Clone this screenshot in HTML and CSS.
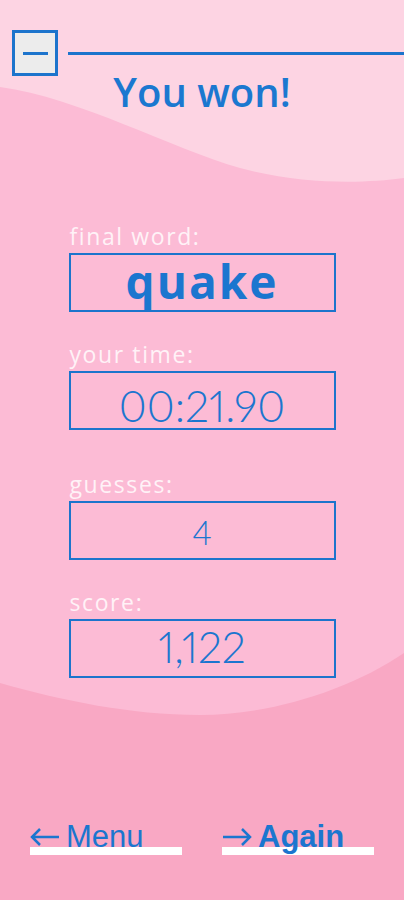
FILE: index.html
```html
<!doctype html>
<html lang="en">
<head>
    <meta charset="UTF-8">
    <meta name="viewport" content="width=device-width, initial-scale=1.0">
    <title>You won!</title>
    <link rel="stylesheet" href="styles.css">
</head>
<body>
<div class="screen">
    <!-- wavy background -->
    <svg class="backdrop" viewBox="0 0 404 900" preserveAspectRatio="none">
        <rect width="404" height="900" fill="#f9a8c4"/>
        <path d="M0 0 H404 V653 C350 690 270 715 200 715 C130 715 60 700 0 683 Z" fill="#fcbbd5"/>
        <path d="M0 0 H404 V178 C360 184 300 184 240 168 C170 148 80 98 0 87 Z" fill="#fdd4e3"/>
    </svg>

    <header class="topbar">
        <button class="collapse-btn"><span class="collapse-btn-bar"></span></button>
        <div class="topbar-line"></div>
    </header>

    <h1 class="title">You won!</h1>

    <div class="stats">
        <div class="stat">
            <div class="stat-label">final word:</div>
            <div class="stat-box word-box"><span class="stat-word">quake</span></div>
        </div>
        <div class="stat">
            <div class="stat-label">your time:</div>
            <div class="stat-box time-box"><span class="stat-num">00:21.90</span></div>
        </div>
        <div class="stat stat-spaced">
            <div class="stat-label">guesses:</div>
            <div class="stat-box guess-box"><span class="stat-num small">4</span></div>
        </div>
        <div class="stat">
            <div class="stat-label">score:</div>
            <div class="stat-box score-box"><span class="stat-num">1,122</span></div>
        </div>
    </div>

    <nav class="actions">
        <a href="#" class="action">
            <svg class="arrow" viewBox="0 0 30 18"><path d="M29 9 H2 M10 1 L2 9 L10 17"/></svg>
            <span>Menu</span>
        </a>
        <a href="#" class="action action-bold">
            <svg class="arrow" viewBox="0 0 30 18"><path d="M1 9 H28 M20 1 L28 9 L20 17"/></svg>
            <span>Again</span>
        </a>
    </nav>
</div>
</body>
</html>
```

FILE: styles.css
```css
html, body {
    margin: 0;
    padding: 0;
}

body {
    font-family: "Open Sans", "Liberation Sans", sans-serif;
    color: #1b76cf;
}

.screen {
    position: relative;
    width: 404px;
    height: 900px;
    overflow: hidden;
    display: flex;
    flex-direction: column;
}

.backdrop {
    position: absolute;
    top: 0;
    left: 0;
    width: 404px;
    height: 900px;
    z-index: 0;
}

.topbar,
.title,
.stats,
.actions {
    position: relative;
    z-index: 1;
}

/* header */
.topbar {
    display: flex;
    align-items: center;
    padding: 30px 0 0 12px;
}

.collapse-btn {
    box-sizing: border-box;
    width: 46px;
    height: 46px;
    padding: 0;
    border: 3px solid #1c74cc;
    background-color: #ececec;
    display: flex;
    align-items: center;
    justify-content: center;
}

.collapse-btn-bar {
    display: block;
    width: 25px;
    height: 3px;
    background-color: #1c74cc;
}

.topbar-line {
    flex: 1;
    height: 3px;
    margin-left: 10px;
    background-color: #1c74cc;
}

.title {
    margin: 0;
    text-align: center;
    font-size: 40px;
    font-weight: 600;
    line-height: 32px;
    color: #1b78d0;
}

/* stats */
.stats {
    margin-top: 116px;
    display: flex;
    flex-direction: column;
    align-items: center;
    gap: 30px;
}

.stat {
    width: 267px;
}

.stat-spaced {
    margin-top: 12px;
}

.stat-label {
    font-size: 23px;
    font-weight: 400;
    line-height: 24px;
    letter-spacing: 1.6px;
    margin: 0 0 5px 1px;
    color: #fff2f7;
}

.stat-box {
    box-sizing: border-box;
    height: 59px;
    border: 2px solid #1c74cc;
    display: flex;
    align-items: center;
    justify-content: center;
}

.word-box {
    padding-bottom: 4px;
}

.time-box {
    padding-top: 10px;
}

.guess-box {
    padding-top: 3px;
}

.score-box {
    padding-bottom: 3px;
}

.stat-word {
    font-size: 46px;
    font-weight: 700;
    line-height: 46px;
    letter-spacing: 2px;
}

.stat-num {
    font-family: Lato, "Open Sans", sans-serif;
    font-size: 43px;
    font-weight: 300;
    line-height: 42px;
    font-variant-numeric: proportional-nums;
}

.stat-num.small {
    font-size: 33px;
    line-height: 33px;
}

/* bottom actions */
.actions {
    margin-top: auto;
    padding: 0 0 45px 30px;
    display: flex;
    gap: 40px;
}

.action {
    box-sizing: border-box;
    width: 152px;
    height: 34px;
    padding-bottom: 3px;
    display: flex;
    align-items: center;
    gap: 6px;
    font-family: "Liberation Sans", Arial, sans-serif;
    font-size: 31px;
    line-height: 31px;
    color: #1b76cf;
    text-decoration: none;
    background: linear-gradient(#fff, #fff) left bottom / 100% 8px no-repeat;
}

.action-bold {
    font-weight: 700;
}

.arrow {
    width: 30px;
    height: 18px;
    fill: none;
    stroke: #1b76cf;
    stroke-width: 2.5;
}
```
